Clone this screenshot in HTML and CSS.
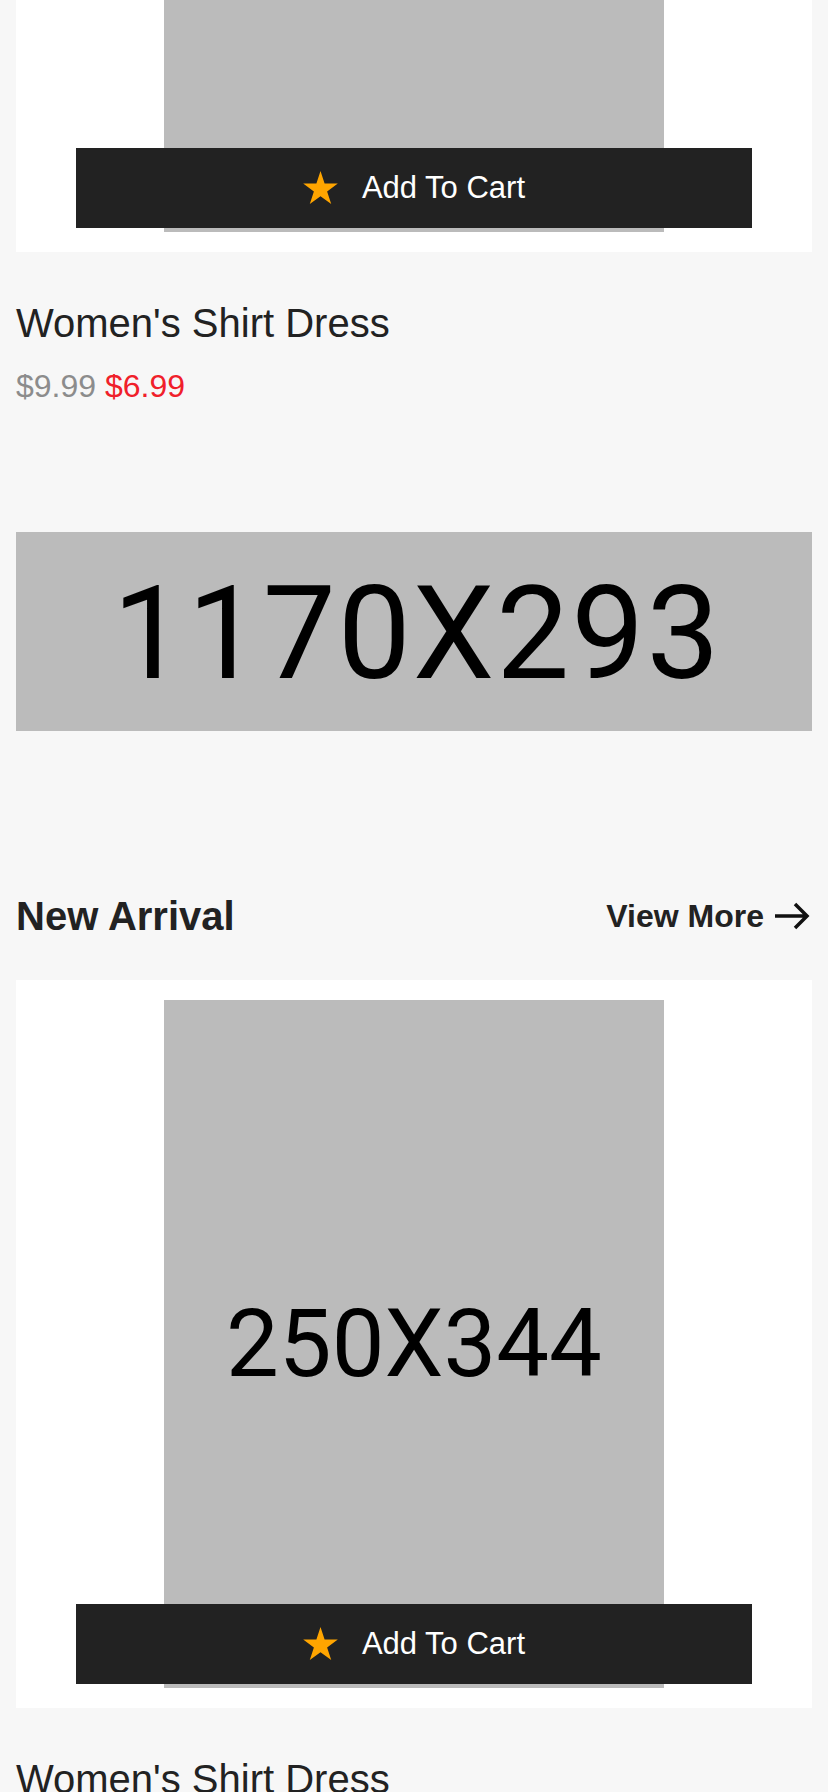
FILE: index.html
```html
<!DOCTYPE html>
<html lang="en">
<head>
  <meta charset="UTF-8" />
  <meta name="viewport" content="width=device-width, initial-scale=1.0"/>
  <title>Shop</title>
  <link rel="stylesheet" href="styles.css">
</head>
<body>
  <main class="page">

    <!-- product -->
    <section class="product">
      <div class="product-card">
        <div class="thumb">250X344</div>
        <button class="cart-btn">
          <svg class="star" viewBox="0 0 34 32.4"><polygon points="17,0 21.02,12.37 34,12.37 23.5,20.01 27.52,32.38 17,24.74 6.48,32.38 10.5,20.01 0,12.37 12.98,12.37"/></svg>
          Add To Cart
        </button>
      </div>
      <h3 class="product-name">Women's Shirt Dress</h3>
      <p class="price"><span class="old">$9.99</span> <span class="new">$6.99</span></p>
    </section>

    <!-- banner -->
    <div class="banner">1170X293</div>

    <!-- new arrival -->
    <div class="section-head">
      <h2>New Arrival</h2>
      <a class="more" href="#">
        View More
        <svg viewBox="0 0 36 28"><path d="M1 14 H33 M21 2 L33 14 L21 26"/></svg>
      </a>
    </div>

    <section class="product">
      <div class="product-card">
        <div class="thumb">250X344</div>
        <button class="cart-btn">
          <svg class="star" viewBox="0 0 34 32.4"><polygon points="17,0 21.02,12.37 34,12.37 23.5,20.01 27.52,32.38 17,24.74 6.48,32.38 10.5,20.01 0,12.37 12.98,12.37"/></svg>
          Add To Cart
        </button>
      </div>
      <h3 class="product-name">Women's Shirt Dress</h3>
      <p class="price"><span class="old">$9.99</span> <span class="new">$6.99</span></p>
    </section>

  </main>
</body>
</html>
```
FILE: styles.css
```css
body {
  margin: 0;
  font-family: "Liberation Sans", Arial, sans-serif;
  background: #f7f7f7;
  color: #222;
  overflow: hidden;
}

/* page is shown scrolled down a bit */
.page {
  padding: 0 16px;
  margin-top: -476px;
}

/* product card */
.product-card {
  position: relative;
  background: #fff;
  padding: 20px 0;
}
.thumb {
  width: 500px;
  height: 688px;
  margin: 0 auto;
  background: #bbb;
  color: #000;
  font-family: Roboto, sans-serif;
  font-size: 94px;
  display: flex;
  align-items: center;
  justify-content: center;
}
.cart-btn {
  position: absolute;
  left: 7.5%;
  bottom: 24px;
  width: 85%;
  height: 80px;
  border: none;
  background: #222;
  color: #fff;
  font-family: inherit;
  font-size: 31px;
  display: flex;
  align-items: center;
  justify-content: center;
  gap: 24px;
  cursor: pointer;
}
.star {
  width: 35px;
  height: 33px;
  fill: #ffa500;
  margin-bottom: 2px;
}

.product-name {
  margin: 48px 0 0;
  font-size: 40px;
  font-weight: normal;
  line-height: 46px;
}
.price {
  margin: 22px 0 0;
  font-size: 32px;
  line-height: 37px;
}
.price .old { color: #8c8c8c; }
.price .new { color: #f0202a; }

/* banner */
.banner {
  margin-top: 127px;
  aspect-ratio: 1170 / 293;
  background: #bbb;
  color: #000;
  font-family: Roboto, sans-serif;
  font-size: 130px;
  letter-spacing: 2px;
  padding: 4px 0 0 6px;
  box-sizing: border-box;
  display: flex;
  align-items: center;
  justify-content: center;
}

/* section heading */
.section-head {
  margin: 162px 0 41px;
  display: flex;
  align-items: center;
  justify-content: space-between;
}
.section-head h2 {
  margin: 0;
  font-size: 40px;
  line-height: 46px;
}
.more {
  display: flex;
  align-items: center;
  gap: 10px;
  margin-right: 2px;
  color: #222;
  font-size: 32px;
  font-weight: bold;
  text-decoration: none;
}
.more svg {
  width: 36px;
  height: 28px;
  fill: none;
  stroke: #111;
  stroke-width: 3.5;
}
```
